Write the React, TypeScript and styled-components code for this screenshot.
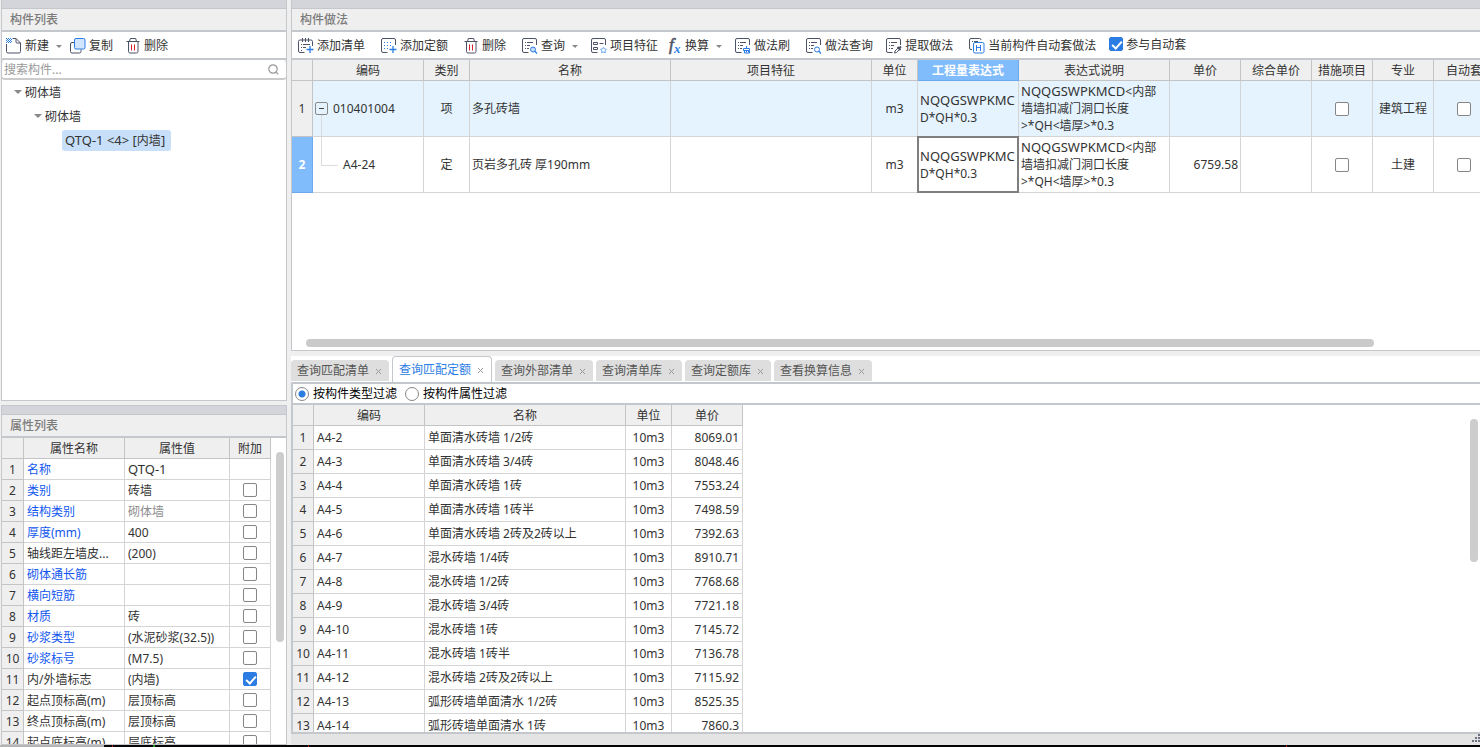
import React from "react";
import styled, { createGlobalStyle, css } from "styled-components";

const INK = "#4d5366";
const BLUE = "#2b7de4";
const LINE = "#c4c7cc";

const GlobalStyle = createGlobalStyle`
  * { box-sizing: border-box; }
  html, body { margin: 0; padding: 0; }
  body {
    background: #efefef;
    color: #333;
    font-family: "Noto Sans", "Noto Sans CJK SC", sans-serif;
    font-size: 12px;
    line-height: 17px;
    overflow: hidden;
  }
  button, input { font: inherit; color: inherit; }
`;

/* ---------- page frame ---------- */

const Page = styled.div`
  display: flex;
  flex-direction: column;
  height: 100vh;
`;

const Columns = styled.main`
  display: grid;
  grid-template-columns: 286px minmax(0, 1fr);
  column-gap: 4px;
  flex: 1;
  min-height: 0;
  padding-left: 1px;
`;

const Column = styled.div<{ $gap: number }>`
  display: flex;
  flex-direction: column;
  gap: ${(p) => p.$gap}px;
  min-width: 0;
  min-height: 0;
`;

const BottomEdge = styled.div`
  height: 2px;
  background:
    linear-gradient(#b4b4b4, #b4b4b4) 0 0 / 104px 2px no-repeat,
    linear-gradient(#b01c1c, #b01c1c) 112px 0 / 1px 2px no-repeat,
    linear-gradient(#1c9a1c, #1c9a1c) 153px 0 / 2px 2px no-repeat,
    linear-gradient(#b01c1c, #b01c1c) 308px 0 / 1px 2px no-repeat,
    linear-gradient(#b01c1c, #b01c1c) 1286px 0 / 1px 2px no-repeat,
    #050505;
`;

const Panel = styled.section<{ $basis?: number; $open?: boolean }>`
  display: flex;
  flex-direction: column;
  flex: ${(p) => (p.$basis ? `0 0 ${p.$basis}px` : "1 1 0")};
  min-height: 0;
  overflow: hidden;
  background: #fff;
  border: 1px solid ${LINE};
  ${(p) => p.$open && "border-right: 0;"}
`;

const UpperPanel = styled(Panel)`
  border-top: 0;
`;

const PanelStrip = styled.div`
  flex: none;
  height: 8px;
  background: #d4d5db;
`;

const PanelTitle = styled.h2`
  flex: none;
  margin: 0;
  height: 24px;
  padding: 2px 8px 0;
  border-top: 1px solid ${LINE};
  border-bottom: 2px solid ${LINE};
  background: #efefef;
  color: #7c7c7c;
  font-size: 12px;
  font-weight: 500;
  line-height: 17px;
`;

/* ---------- toolbar ---------- */

const Toolbar = styled.div<{ $inset: number }>`
  display: flex;
  align-items: center;
  flex: none;
  height: 28px;
  padding: 2px 0 0 ${(p) => p.$inset}px;
  border-bottom: 2px solid ${LINE};
  background: #fff;
  white-space: nowrap;
`;

const spaceAfter = { tight: 8, normal: 13, wide: 16 };

const ToolButton = styled.button<{ $space?: keyof typeof spaceAfter }>`
  display: flex;
  align-items: center;
  gap: 3px;
  height: 18px;
  margin: 0 ${(p) => spaceAfter[p.$space ?? "normal"]}px 0 0;
  padding: 0;
  border: 0;
  background: none;
  line-height: 18px;
  svg { flex: none; display: block; }
`;

const Caret = styled.span<{ $tree?: boolean }>`
  width: 0;
  height: 0;
  border: solid transparent;
  border-width: ${(p) => (p.$tree ? "4px 4px 0" : "3px 3px 0")};
  border-top-color: #888;
  ${(p) => !p.$tree && "margin-left: 4px;"}
`;

const CheckBox = styled.input.attrs({ type: "checkbox" })`
  appearance: none;
  display: block;
  flex: none;
  position: relative;
  width: 14px;
  height: 14px;
  margin: 0;
  border: 1px solid #868686;
  border-radius: 2px;
  background: #fff;
  &:checked { border-color: ${BLUE}; background: ${BLUE}; }
  &:checked::after {
    content: "";
    position: absolute;
    left: 4px;
    top: 1px;
    width: 4px;
    height: 8px;
    border: solid #fff;
    border-width: 0 2px 2px 0;
    transform: rotate(42deg);
  }
`;

const CheckLabel = styled.label`
  display: flex;
  align-items: center;
  gap: 3px;
  height: 18px;
  margin-bottom: 4px;
`;

/* ---------- component list ---------- */

const SearchBox = styled.label`
  display: flex;
  align-items: center;
  flex: none;
  height: 20px;
  padding: 0 7px 0 0;
  border: solid #cbcbcb;
  border-width: 0 1px 2px;
  border-radius: 4px;
  margin: 0 -1px;
`;

const SearchInput = styled.input`
  flex: 1;
  min-width: 0;
  height: 17px;
  padding: 0 2px;
  border: 0;
  outline: 0;
  background: none;
  &::placeholder { color: #999; opacity: 1; }
`;

const Tree = styled.ul`
  margin: 0;
  padding: 0;
  list-style: none;
`;

const TreeRow = styled.li<{ $level: number }>`
  display: flex;
  align-items: center;
  gap: 3px;
  height: 24px;
  padding-left: ${(p) => p.$level * 20 - 8}px;
`;

const TreeLeaf = styled.span`
  margin-left: 8px;
  padding: 2px 6px 2px 3px;
  border-radius: 3px;
  background: #c8dffa;
  white-space: pre;
`;

const Wide = styled.span`
  font-size: 13px;
`;

/* ---------- grids ---------- */

const GridArea = styled.div`
  display: flex;
  flex: 1;
  min-height: 0;
  overflow: hidden;
`;

const Grid = styled.table<{ $width: number }>`
  flex: none;
  align-self: flex-start;
  width: ${(p) => p.$width}px;
  table-layout: fixed;
  border-collapse: separate;
  border-spacing: 0;
`;

const HeadCell = styled.th<{ $active?: boolean }>`
  height: 21px;
  padding: 0;
  border: solid #c4c4c4;
  border-width: 0 1px 1px 0;
  background: #efefef;
  font-weight: 400;
  line-height: 17px;
  white-space: nowrap;
  overflow: hidden;
  ${(p) =>
    p.$active &&
    css`
      background: #80bbfb;
      border-color: #6ba9ee;
      color: #fff;
      font-weight: 700;
    `}
`;

const NumberCell = styled(HeadCell)<{ $h: number }>`
  height: ${(p) => p.$h}px;
`;

const Cell = styled.td<{ $h: number; $align?: string; $tone?: string }>`
  height: ${(p) => p.$h}px;
  padding: 0 3px;
  border: solid #d4d4d4;
  border-width: 0 1px 1px 0;
  text-align: ${(p) => p.$align ?? "left"};
  color: ${(p) => p.$tone ?? "inherit"};
  white-space: nowrap;
  overflow: hidden;
  text-overflow: ellipsis;
  ${CheckBox} { margin: 0 auto; }
`;

const MethodRow = styled.tr<{ $tinted?: boolean }>`
  background: ${(p) => (p.$tinted ? "#e5f3ff" : "#fff")};
`;

const MethodCell = styled(Cell)<{ $selected?: boolean }>`
  padding: 0 2px;
  ${(p) =>
    p.$selected &&
    css`
      position: relative;
      overflow: visible;
      &::after {
        content: "";
        position: absolute;
        inset: -1px;
        border: 2px solid #7f7f7f;
      }
    `}
`;

const CodeCell = styled(MethodCell)<{ $child?: boolean }>`
  position: relative;
  padding-left: ${(p) => (p.$child ? 30 : 2)}px;
  &::before {
    content: "";
    position: absolute;
    left: 8px;
    top: ${(p) => (p.$child ? "0" : "34px")};
    width: ${(p) => (p.$child ? "16px" : "0")};
    height: ${(p) => (p.$child ? "28px" : "22px")};
    border-left: 1px solid #dcdcdc;
    border-bottom: ${(p) => (p.$child ? "1px solid #dcdcdc" : "0")};
  }
`;

const CodeContent = styled.div`
  display: flex;
  align-items: center;
  gap: 5px;
`;

const Collapse = styled.button`
  display: flex;
  align-items: center;
  justify-content: center;
  width: 13px;
  height: 13px;
  padding: 0;
  border: 1px solid #888;
  border-radius: 2px;
  background: none;
  &::before {
    content: "";
    width: 5px;
    height: 1px;
    background: #444;
  }
`;

const HorizontalTrack = styled.div`
  flex: none;
  height: 11px;
  padding-left: 14px;
`;

const HorizontalThumb = styled.div`
  width: 91%;
  height: 8px;
  border-radius: 4px;
  background: #cacaca;
`;

const VerticalThumb = styled.div<{ $length: number }>`
  flex: none;
  width: 8px;
  height: ${(p) => p.$length}px;
  margin: 14px 2px 0 auto;
  border-radius: 4px;
  background: #cdcdcd;
`;

/* ---------- query panel ---------- */

const QueryPanel = styled.section`
  display: flex;
  flex-direction: column;
  flex: 0 0 389px;
  min-height: 0;
  background: #fff;
`;

const TabList = styled.div`
  display: flex;
  align-items: flex-end;
  gap: 3px;
  flex: none;
  height: 26px;
  white-space: nowrap;
`;

const Tab = styled.div<{ $active?: boolean }>`
  display: flex;
  align-items: center;
  gap: 6px;
  height: 21px;
  margin-bottom: 1px;
  padding: 0 6px;
  border-radius: 4px 4px 0 0;
  background: #dedede;
  color: #555;
  ${(p) =>
    p.$active &&
    css`
      height: 26px;
      margin-bottom: 0;
      border: 1px solid ${LINE};
      border-bottom: 0;
      background: #fff;
      color: ${BLUE};
    `}
`;

const TabName = styled.button`
  padding: 0;
  border: 0;
  background: none;
`;

const TabClose = styled.button`
  display: flex;
  padding: 1px 0 0;
  border: 0;
  width: 8px;
  background: none;
`;

const QueryBody = styled.div`
  display: flex;
  flex-direction: column;
  flex: 1;
  min-height: 0;
  border: solid ${LINE};
  border-width: 2px 0 2px 2px;
`;

const FilterBar = styled.div`
  display: flex;
  align-items: center;
  gap: 8px;
  flex: none;
  height: 21px;
  padding-left: 2px;
  border-bottom: 2px solid ${LINE};
  color: #000;
`;

const RadioLabel = styled.label`
  display: flex;
  align-items: center;
  gap: 4px;
`;

const Radio = styled.input.attrs({ type: "radio" })`
  appearance: none;
  width: 14px;
  height: 14px;
  margin: 0;
  border: 1px solid #868686;
  border-radius: 50%;
  background: #fff;
  &:checked { background: radial-gradient(circle, ${BLUE} 0 3px, #fff 4px); }
`;

const StatusBar = styled.footer`
  display: flex;
  justify-content: flex-end;
  flex: none;
  height: 11px;
  background: #e4e4e4;
`;

/* ---------- icons ---------- */

const Icon = ({ width = 16, children }: { width?: number; children: React.ReactNode }) => (
  <svg width={width} height="16" viewBox={`0 0 ${width} 16`} fill="none" stroke={INK} aria-hidden="true">
    {children}
  </svg>
);

const NewIcon = () => (
  <Icon>
    <path d="M.5 6v7.500a1.500 1.500 0 0 0 1.500 1.500h11a1.500 1.500 0 0 0 1.500-1.500V5L10 .5H6.500M10 .5V4a1 1 0 0 0 1 1h3.500" />
    <path
      d="M0 .5h5M0 2.500h5M0 4.500h5M1 1.500h5M1 3.500h5"
      stroke={BLUE}
      strokeDasharray="1 1"
    />
  </Icon>
);

const CopyIcon = () => (
  <Icon>
    <path d="M4 4.500H2A1.500 1.500 0 0 0 .5 6v7.500A1.500 1.500 0 0 0 2 15h7.500a1.500 1.500 0 0 0 1.500-1.500V11.500" />
    <rect x="4.500" y=".5" width="10.500" height="10.500" rx="1.500" fill="#d3e5fc" stroke={BLUE} />
  </Icon>
);

const TrashIcon = () => (
  <Icon width={15}>
    <path d="M.5 3.500h13M3.500 3.500L4.300.500h5.400l.8 3M2.500 3.500V13.500A1.500 1.500 0 0 0 4 15h6.500a1.500 1.500 0 0 0 1.500-1.500V3.500" />
    <path d="M5.500 6.500v6M8.500 6.500v6" stroke="#d9202e" />
  </Icon>
);

const SheetFrame = () => (
  <path d="M6.500 14.500H2A1.500 1.500 0 0 1 .5 13V2A1.500 1.500 0 0 1 2 .5h11A1.500 1.500 0 0 1 14.500 2v5" />
);

const SheetLines = () => <path d="M3 4.500h1M5 4.500h6M3 7.500h1M5 7.500h3M3 10.500h1M5 10.500h2" />;

const AddListIcon = () => (
  <Icon>
    <path d="M6.500 14.500H2A1.500 1.500 0 0 1 .5 13V3.500A1.500 1.500 0 0 1 2 2h11a1.500 1.500 0 0 1 1.500 1.500V8M4.500 0v4M7.500 0v4M10.500 0v4" />
    <path d="M3 6.500h1M5 6.500h7M3 9.500h1M5 9.500h3M3 12.500h1" />
    <path d="M8.500 11.500h7M12 8v7" stroke={BLUE} strokeWidth="1.300" />
  </Icon>
);

const AddQuotaIcon = () => (
  <Icon>
    <SheetFrame />
    <path d="M3 4.500h9M3 7.500h7M3 10.500h4" stroke={BLUE} strokeDasharray="1 2" />
    <path d="M8.500 11.500h7M12 8v7" stroke={BLUE} strokeWidth="1.300" />
  </Icon>
);

const QueryIcon = ({ filled }: { filled?: boolean }) => (
  <Icon>
    <SheetFrame />
    <SheetLines />
    <circle cx="11" cy="11.500" r="2.500" stroke={BLUE} fill={filled ? "#c4dbfa" : "none"} />
    <path d="M12.800 13.300l2.200 2.200" stroke={BLUE} strokeWidth="1.300" />
  </Icon>
);

const FeatureIcon = () => (
  <Icon>
    <SheetFrame />
    <path d="M2.500 4.500h4v2h-4zM2.500 9.500h4v2h-4zM8.500 5.500h4" />
    <path d="M12.500 9.200l.9 1.700 2 .4-1.300 1.500.2 2-1.800-.7-1.800.7.200-2-1.300-1.500 2-.4z" stroke="#69a4ef" />
  </Icon>
);

const FormulaIcon = () => (
  <svg width="16" height="18" viewBox="0 0 16 18" aria-hidden="true">
    <g fontFamily="Liberation Serif, serif" fontStyle="italic" fontWeight="700">
      <text x="3" y="13" fontSize="17" fontWeight="400" fill={INK} stroke={INK} strokeWidth=".6">f</text>
      <text x="8" y="16" fontSize="13" fill={BLUE}>x</text>
    </g>
  </svg>
);

const BrushIcon = () => (
  <Icon>
    <SheetFrame />
    <SheetLines />
    <path d="M11.500 8v2.500M8.500 12.500v-2h6v2zM9.500 12.500v2.500h5v-2.500M11.500 12.500v2M13.500 12.500v2" stroke={BLUE} />
  </Icon>
);

const ExtractIcon = () => (
  <Icon>
    <SheetFrame />
    <SheetLines />
    <path d="M8.500 15l.5-2 3-3 1.500 1.500-3 3z" />
    <path d="M11.500 9l3 3M13 10.500l2-2" strokeWidth="2" />
  </Icon>
);

const AutoIcon = () => (
  <Icon>
    <path d="M3 11.500H2A1.500 1.500 0 0 1 .5 10V2A1.500 1.500 0 0 1 2 .5h8.500A1.500 1.500 0 0 1 12 2M3 3.500h1M5 3.500h4" />
    <rect x="4.500" y="4.500" width="10.500" height="10.500" rx="1.500" stroke={BLUE} />
    <path d="M7.500 7v6M11.500 7v6M7.500 9.500h4" stroke={BLUE} />
  </Icon>
);

const SearchIcon = () => (
  <svg width="11" height="11" viewBox="0 0 11 11" fill="none" stroke="#999" strokeWidth="1.200" aria-hidden="true">
    <circle cx="5" cy="5" r="4.200" />
    <path d="M8 8l2.300 2.300" />
  </svg>
);

const CloseIcon = () => (
  <svg width="7" height="7" viewBox="0 0 7 7" stroke="#999" aria-hidden="true">
    <path d="M1 1l5 5M6 1L1 6" />
  </svg>
);

const ResizeGrip = () => (
  <svg width="8" height="8" viewBox="0 0 8 8" fill="#6d7280" aria-hidden="true">
    <path d="M6 0h2v2H6zM3 3h2v2H3zM6 3h2v2H6zM0 6h2v2H0zM3 6h2v2H3zM6 6h2v2H6z" />
  </svg>
);

/* ---------- data ---------- */

type Property = { name: string; value: string; linked?: boolean; muted?: boolean; extra?: boolean };

const properties: Property[] = [
  { name: "名称", value: "QTQ-1", linked: true },
  { name: "类别", value: "砖墙", linked: true, extra: false },
  { name: "结构类别", value: "砌体墙", linked: true, muted: true, extra: false },
  { name: "厚度(mm)", value: "400", linked: true, extra: false },
  { name: "轴线距左墙皮...", value: "(200)", extra: false },
  { name: "砌体通长筋", value: "", linked: true, extra: false },
  { name: "横向短筋", value: "", linked: true, extra: false },
  { name: "材质", value: "砖", linked: true, extra: false },
  { name: "砂浆类型", value: "(水泥砂浆(32.5))", linked: true, extra: false },
  { name: "砂浆标号", value: "(M7.5)", linked: true, extra: false },
  { name: "内/外墙标志", value: "(内墙)", extra: true },
  { name: "起点顶标高(m)", value: "层顶标高", extra: false },
  { name: "终点顶标高(m)", value: "层顶标高", extra: false },
  { name: "起点底标高(m)", value: "层底标高", extra: false },
];

const methodColumns: [string, number][] = [
  ["编码", 111],
  ["类别", 46],
  ["名称", 201],
  ["项目特征", 201],
  ["单位", 46],
  ["工程量表达式", 101],
  ["表达式说明", 151],
  ["单价", 71],
  ["综合单价", 71],
  ["措施项目", 61],
  ["专业", 61],
  ["自动套", 61],
];

const methods = [
  { code: "010401004", kind: "项", name: "多孔砖墙", price: "", trade: "建筑工程" },
  { code: "A4-24", kind: "定", name: "页岩多孔砖 厚190mm", price: "6759.58", trade: "土建" },
];

const tabs = ["查询匹配清单", "查询匹配定额", "查询外部清单", "查询清单库", "查询定额库", "查看换算信息"];

const quotas: [string, string, string][] = [
  ["A4-2", "单面清水砖墙 1/2砖", "8069.01"],
  ["A4-3", "单面清水砖墙 3/4砖", "8048.46"],
  ["A4-4", "单面清水砖墙 1砖", "7553.24"],
  ["A4-5", "单面清水砖墙 1砖半", "7498.59"],
  ["A4-6", "单面清水砖墙 2砖及2砖以上", "7392.63"],
  ["A4-7", "混水砖墙 1/4砖", "8910.71"],
  ["A4-8", "混水砖墙 1/2砖", "7768.68"],
  ["A4-9", "混水砖墙 3/4砖", "7721.18"],
  ["A4-10", "混水砖墙 1砖", "7145.72"],
  ["A4-11", "混水砖墙 1砖半", "7136.78"],
  ["A4-12", "混水砖墙 2砖及2砖以上", "7115.92"],
  ["A4-13", "弧形砖墙单面清水 1/2砖", "8525.35"],
  ["A4-14", "弧形砖墙单面清水 1砖", "7860.3"],
];

/* ---------- panels ---------- */

const ComponentList = () => (
  <UpperPanel>
    <PanelStrip />
    <PanelTitle>构件列表</PanelTitle>
    <Toolbar $inset={4}>
      <ToolButton $space="tight"><NewIcon />新建<Caret /></ToolButton>
      <ToolButton><CopyIcon />复制</ToolButton>
      <ToolButton><TrashIcon />删除</ToolButton>
    </Toolbar>
    <SearchBox>
      <SearchInput type="text" placeholder="搜索构件..." aria-label="搜索构件" />
      <SearchIcon />
    </SearchBox>
    <Tree>
      <TreeRow $level={1}><Caret $tree />砌体墙</TreeRow>
      <TreeRow $level={2}><Caret $tree />砌体墙</TreeRow>
      <TreeRow $level={3}>
        <TreeLeaf><Wide>QTQ-1 &lt;4&gt; [</Wide>内墙<Wide>]</Wide></TreeLeaf>
      </TreeRow>
    </Tree>
  </UpperPanel>
);

const PropertyList = () => (
  <Panel $basis={340}>
    <PanelStrip />
    <PanelTitle>属性列表</PanelTitle>
    <GridArea>
      <Grid $width={269}>
        <colgroup><col width="22" /><col width="101" /><col width="105" /><col width="41" /></colgroup>
        <thead>
          <tr><HeadCell /><HeadCell>属性名称</HeadCell><HeadCell>属性值</HeadCell><HeadCell>附加</HeadCell></tr>
        </thead>
        <tbody>
          {properties.map((p, i) => (
            <tr key={p.name}>
              <NumberCell $h={21}>{i + 1}</NumberCell>
              <Cell $h={21} $tone={p.linked ? "#1257f0" : undefined}>{p.name}</Cell>
              <Cell $h={21} $tone={p.muted ? "#8c8c8c" : undefined}>
                {i === 0 ? <Wide>{p.value}</Wide> : p.value}
              </Cell>
              <Cell $h={21}>
                {p.extra !== undefined && <CheckBox defaultChecked={p.extra} aria-label={`附加 ${p.name}`} />}
              </Cell>
            </tr>
          ))}
        </tbody>
      </Grid>
      <VerticalThumb $length={190} />
    </GridArea>
  </Panel>
);

const MethodPanel = () => (
  <UpperPanel $open>
    <PanelStrip />
    <PanelTitle>构件做法</PanelTitle>
    <Toolbar $inset={6}>
      <ToolButton $space="wide"><AddListIcon />添加清单</ToolButton>
      <ToolButton $space="wide"><AddQuotaIcon />添加定额</ToolButton>
      <ToolButton $space="wide"><TrashIcon />删除</ToolButton>
      <ToolButton><QueryIcon filled />查询<Caret /></ToolButton>
      <ToolButton $space="tight"><FeatureIcon />项目特征</ToolButton>
      <ToolButton><FormulaIcon />换算<Caret /></ToolButton>
      <ToolButton $space="wide"><BrushIcon />做法刷</ToolButton>
      <ToolButton><QueryIcon />做法查询</ToolButton>
      <ToolButton $space="wide"><ExtractIcon />提取做法</ToolButton>
      <ToolButton><AutoIcon />当前构件自动套做法</ToolButton>
      <CheckLabel><CheckBox defaultChecked />参与自动套</CheckLabel>
    </Toolbar>
    <GridArea>
      <Grid $width={1203}>
        <colgroup>
          <col width="21" />
          {methodColumns.map(([name, width]) => <col key={name} width={width} />)}
        </colgroup>
        <thead>
          <tr>
            <HeadCell />
            {methodColumns.map(([name]) => (
              <HeadCell key={name} $active={name === "工程量表达式"}>{name}</HeadCell>
            ))}
          </tr>
        </thead>
        <tbody>
          {methods.map((m, i) => (
            <MethodRow key={m.code} $tinted={i === 0}>
              <NumberCell $h={56} $active={i === 1}>{i + 1}</NumberCell>
              <CodeCell $h={56} $child={i === 1}>
                <CodeContent>
                  {i === 0 && <Collapse aria-label="折叠" />}
                  {m.code}
                </CodeContent>
              </CodeCell>
              <MethodCell $h={56} $align="center">{m.kind}</MethodCell>
              <MethodCell $h={56}>{m.name}</MethodCell>
              <MethodCell $h={56} />
              <MethodCell $h={56} $align="center">m3</MethodCell>
              <MethodCell $h={56} $selected={i === 1}>
                <Wide>NQQGSWPKMC</Wide><br />D*QH*0.3
              </MethodCell>
              <MethodCell $h={56}>
                <Wide>NQQGSWPKMCD</Wide>&lt;内部<br />墙墙扣减门洞口长度<br />&gt;*QH&lt;墙厚&gt;*0.3
              </MethodCell>
              <MethodCell $h={56} $align="right">{m.price}</MethodCell>
              <MethodCell $h={56} />
              <MethodCell $h={56}><CheckBox aria-label="措施项目" /></MethodCell>
              <MethodCell $h={56} $align="center">{m.trade}</MethodCell>
              <MethodCell $h={56}><CheckBox aria-label="自动套" /></MethodCell>
            </MethodRow>
          ))}
        </tbody>
      </Grid>
    </GridArea>
    <HorizontalTrack><HorizontalThumb /></HorizontalTrack>
  </UpperPanel>
);

const QuotaPanel = () => (
  <QueryPanel>
    <TabList>
      {tabs.map((tab, i) => (
        <Tab key={tab} $active={i === 1}>
          <TabName>{tab}</TabName>
          <TabClose aria-label={`关闭${tab}`}><CloseIcon /></TabClose>
        </Tab>
      ))}
    </TabList>
    <QueryBody>
      <FilterBar>
        <RadioLabel><Radio name="filter" defaultChecked />按构件类型过滤</RadioLabel>
        <RadioLabel><Radio name="filter" />按构件属性过滤</RadioLabel>
      </FilterBar>
      <GridArea>
        <Grid $width={450}>
          <colgroup><col width="21" /><col width="111" /><col width="201" /><col width="46" /><col width="71" /></colgroup>
          <thead>
            <tr><HeadCell /><HeadCell>编码</HeadCell><HeadCell>名称</HeadCell><HeadCell>单位</HeadCell><HeadCell>单价</HeadCell></tr>
          </thead>
          <tbody>
            {quotas.map(([code, name, price], i) => (
              <tr key={code}>
                <NumberCell $h={24}>{i + 1}</NumberCell>
                <Cell $h={24}>{code}</Cell>
                <Cell $h={24}>{name}</Cell>
                <Cell $h={24} $align="center">10m3</Cell>
                <Cell $h={24} $align="right">{price}</Cell>
              </tr>
            ))}
          </tbody>
        </Grid>
        <VerticalThumb $length={143} />
      </GridArea>
    </QueryBody>
    <StatusBar><ResizeGrip /></StatusBar>
  </QueryPanel>
);

export default function App() {
  return (
    <Page>
      <GlobalStyle />
      <Columns>
        <Column $gap={4}>
          <ComponentList />
          <PropertyList />
        </Column>
        <Column $gap={5}>
          <MethodPanel />
          <QuotaPanel />
        </Column>
      </Columns>
      <BottomEdge />
    </Page>
  );
}
